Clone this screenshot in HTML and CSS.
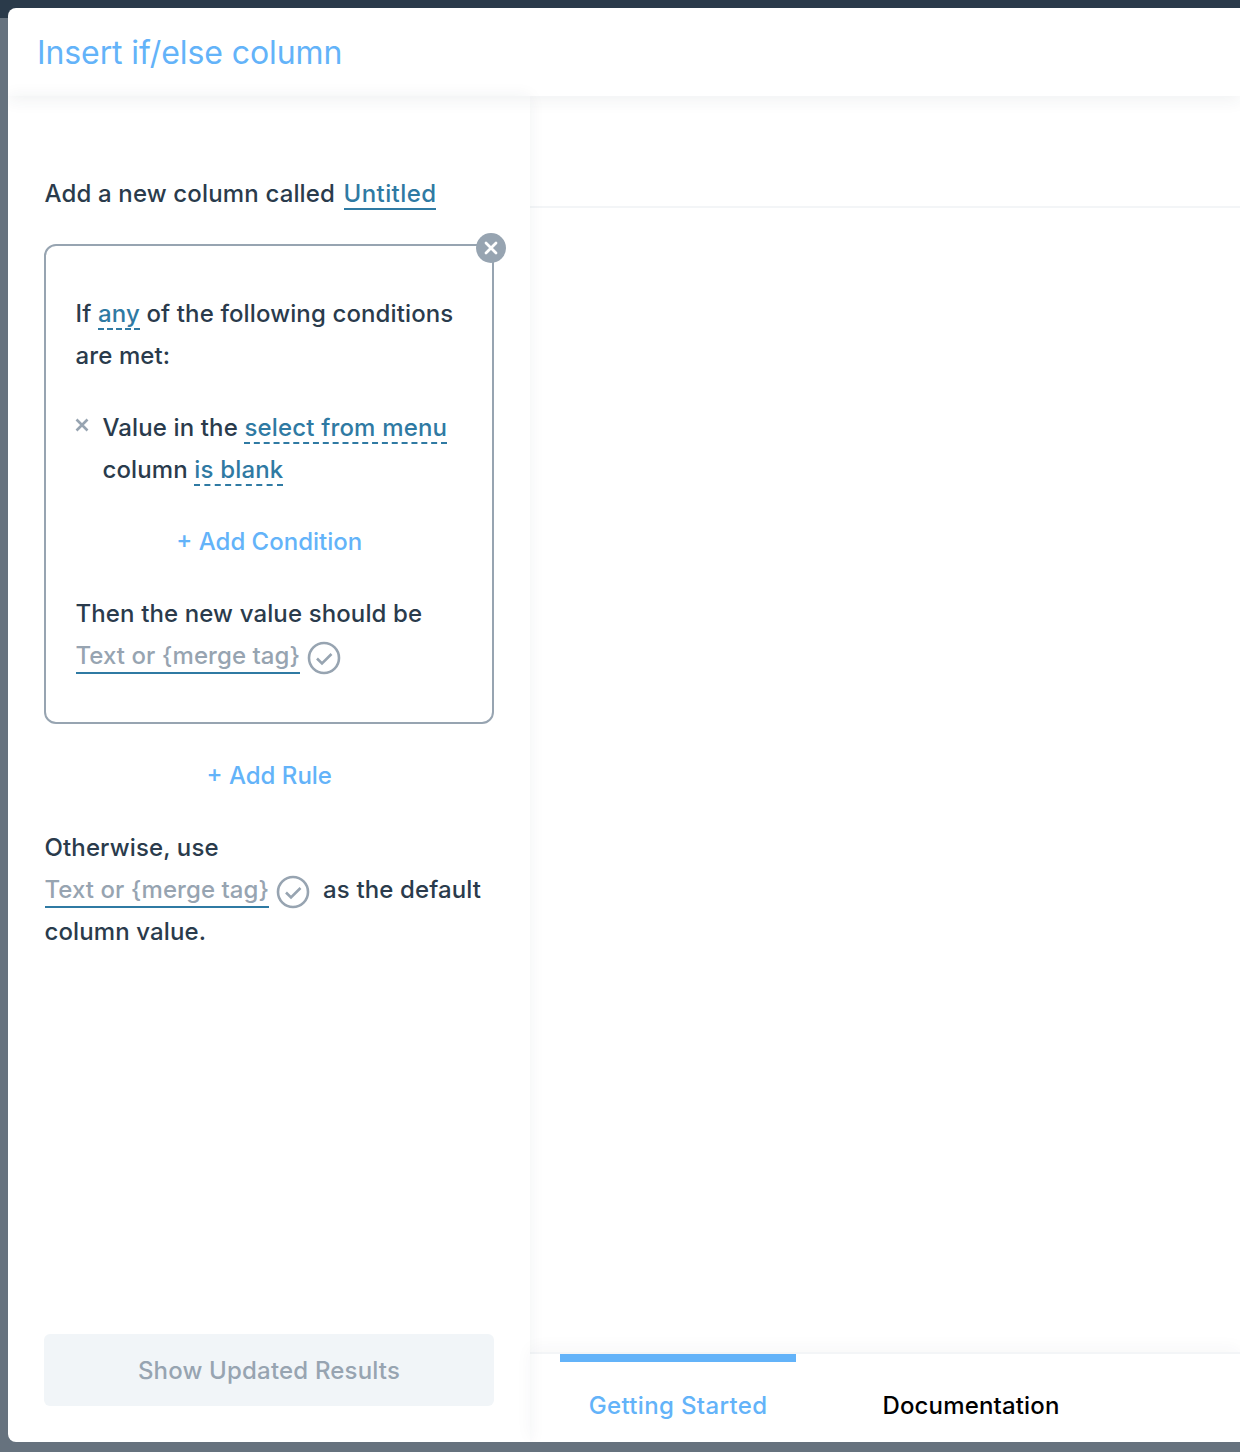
FILE: index.html
```html
<!DOCTYPE html>
<html lang="en">
<head>
<meta charset="utf-8">
<title>Insert if/else column</title>
<link rel="stylesheet" href="styles.css">
</head>
<body>
<div class="modal">
  <header class="modal-header"><h1 class="title">Insert if/else column</h1></header>
  <div class="modal-body">
    <aside class="panel">
      <p class="line name-line">Add a new column called <span class="link solid">Untitled</span></p>
      <section class="rule">
        <button class="rule-close" aria-label="Remove rule">
          <svg width="14" height="14" viewBox="0 0 14 14"><path d="M2 2l10 10M12 2l-10 10" stroke="#fff" stroke-width="2.8" stroke-linecap="round"/></svg>
        </button>
        <p class="line">If <span class="link dashed">any</span> of the following conditions are met:</p>
        <div class="condition">
          <svg class="cond-x" width="14" height="14" viewBox="0 0 14 14"><path d="M1.5 1.5l11 11M12.5 1.5l-11 11" stroke="#97a4b1" stroke-width="2.6"/></svg>
          <p class="line">Value in the <span class="link dashed">select from menu</span> column <span class="link dashed">is blank</span></p>
        </div>
        <div class="add add-condition">+ Add Condition</div>
        <p class="line">Then the new value should be</p>
        <p class="line"><span class="input">Text or {merge tag}</span><svg class="check" width="34" height="34" viewBox="0 0 34 34"><circle cx="17" cy="17" r="15" fill="none" stroke="#97a4b1" stroke-width="2.6"/><path d="M10 17.5l5 5 9.5-9.5" fill="none" stroke="#97a4b1" stroke-width="2.6"/></svg></p>
      </section>
      <div class="add add-rule">+ Add Rule</div>
      <p class="line otherwise">Otherwise, use<br><span class="input">Text or {merge tag}</span><svg class="check inline" width="34" height="34" viewBox="0 0 34 34"><circle cx="17" cy="17" r="15" fill="none" stroke="#97a4b1" stroke-width="2.6"/><path d="M10 17.5l5 5 9.5-9.5" fill="none" stroke="#97a4b1" stroke-width="2.6"/></svg> as the default column value.</p>
      <button class="show-results">Show Updated Results</button>
    </aside>
    <main class="preview">
      <div class="preview-head"></div>
      <div class="preview-main"></div>
      <nav class="tabs">
        <div class="tab active">Getting Started</div>
        <div class="tab secondary">Documentation</div>
      </nav>
    </main>
  </div>
</div>
</body>
</html>
```
FILE: styles.css
```css
* { box-sizing: border-box; }
html, body { height: 100%; margin: 0; }
body {
  font-family: Inter, "Liberation Sans", sans-serif;
  font-size: 24px;
  font-weight: 500;
  color: #2a3b4c;
  overflow: hidden;
  padding: 8px 0 10px 8px;
  background: linear-gradient(#2a3a4a 0, #2a3a4a 18px, #66727e 18px);
}
.modal {
  height: 100%;
  background: #fff;
  border-radius: 8px 0 0 8px;
  display: flex;
  flex-direction: column;
  overflow: hidden;
}
.modal-header {
  height: 88px;
  flex: none;
  display: flex;
  align-items: center;
  padding-left: 29px;
  position: relative;
  z-index: 2;
  box-shadow: 0 4px 16px rgba(42, 59, 76, .07);
}
.title { margin: 0; font-size: 32px; font-weight: 400; letter-spacing: -.1px; color: #63b3f9; }
.modal-body { flex: 1; display: flex; min-height: 0; }
.panel {
  width: 522px;
  flex: none;
  padding: 77px 36px 36px 36.5px;
  display: flex;
  flex-direction: column;
  position: relative;
  z-index: 1;
  box-shadow: 0 0 16px rgba(42, 59, 76, .06);
}
.line { margin: 0; line-height: 42px; letter-spacing: .12px; }
.link { color: #2f7aa3; }
.solid { border-bottom: 2px solid #2f7aa3; margin-left: 2px; letter-spacing: .4px; }
.dashed { border-bottom: 2px dashed #2f7aa3; letter-spacing: .17px; }
.name-line { height: 42px; letter-spacing: .15px; }
.rule {
  position: relative;
  margin: 29px 0 0 -.5px;
  width: 450px;
  height: 480px;
  border: 2px solid #97a4b1;
  border-radius: 12px;
  padding: 47px 20px 0 29.5px;
}
.rule-close {
  position: absolute;
  top: -13px;
  right: -14px;
  width: 30px;
  height: 30px;
  border: 0;
  padding: 0;
  border-radius: 50%;
  background: #97a4b1;
  display: flex;
  align-items: center;
  justify-content: center;
}
.condition { position: relative; margin-top: 30px; padding-left: 27px; }
.cond-x { position: absolute; left: -1px; top: 11px; }
.add { color: #63b3f9; text-align: center; line-height: 42px; }
.add-condition { margin-top: 30px; margin-bottom: 30px; margin-right: 9px; }
.add-rule { margin-top: 31px; }
.input { color: #97a4b1; border-bottom: 2px solid #2f7aa3; padding-bottom: 2px; letter-spacing: .05px; }
.check { margin-left: 7px; vertical-align: -11px; }
.check.inline { margin-left: 6.5px; margin-right: 7px; }
.otherwise { margin-top: 30px; }
.show-results {
  margin-top: auto;
  margin-left: -.5px;
  width: 450px;
  height: 72px;
  border: 0;
  border-radius: 6px;
  background: #f1f5f8;
  color: #97a4b1;
  font: inherit;
  letter-spacing: .18px;
}
.preview { flex: 1; display: flex; flex-direction: column; min-width: 0; }
.preview-head { height: 112px; flex: none; border-bottom: 2px solid #f3f5f7; }
.preview-main { flex: 1; }
.tabs {
  height: 90px;
  flex: none;
  display: flex;
  padding-left: 30px;
  border-top: 2px solid #f3f5f7;
  box-shadow: 0 -4px 16px rgba(42, 59, 76, .04);
}
.tab { width: 236px; margin-right: 57px; text-align: center; padding-top: 31px; color: #000; line-height: 42px; }
.tab.secondary { letter-spacing: .15px; }
.tab.active { color: #63b3f9; border-top: 8px solid #63b3f9; padding-top: 23px; letter-spacing: .35px; }
```
